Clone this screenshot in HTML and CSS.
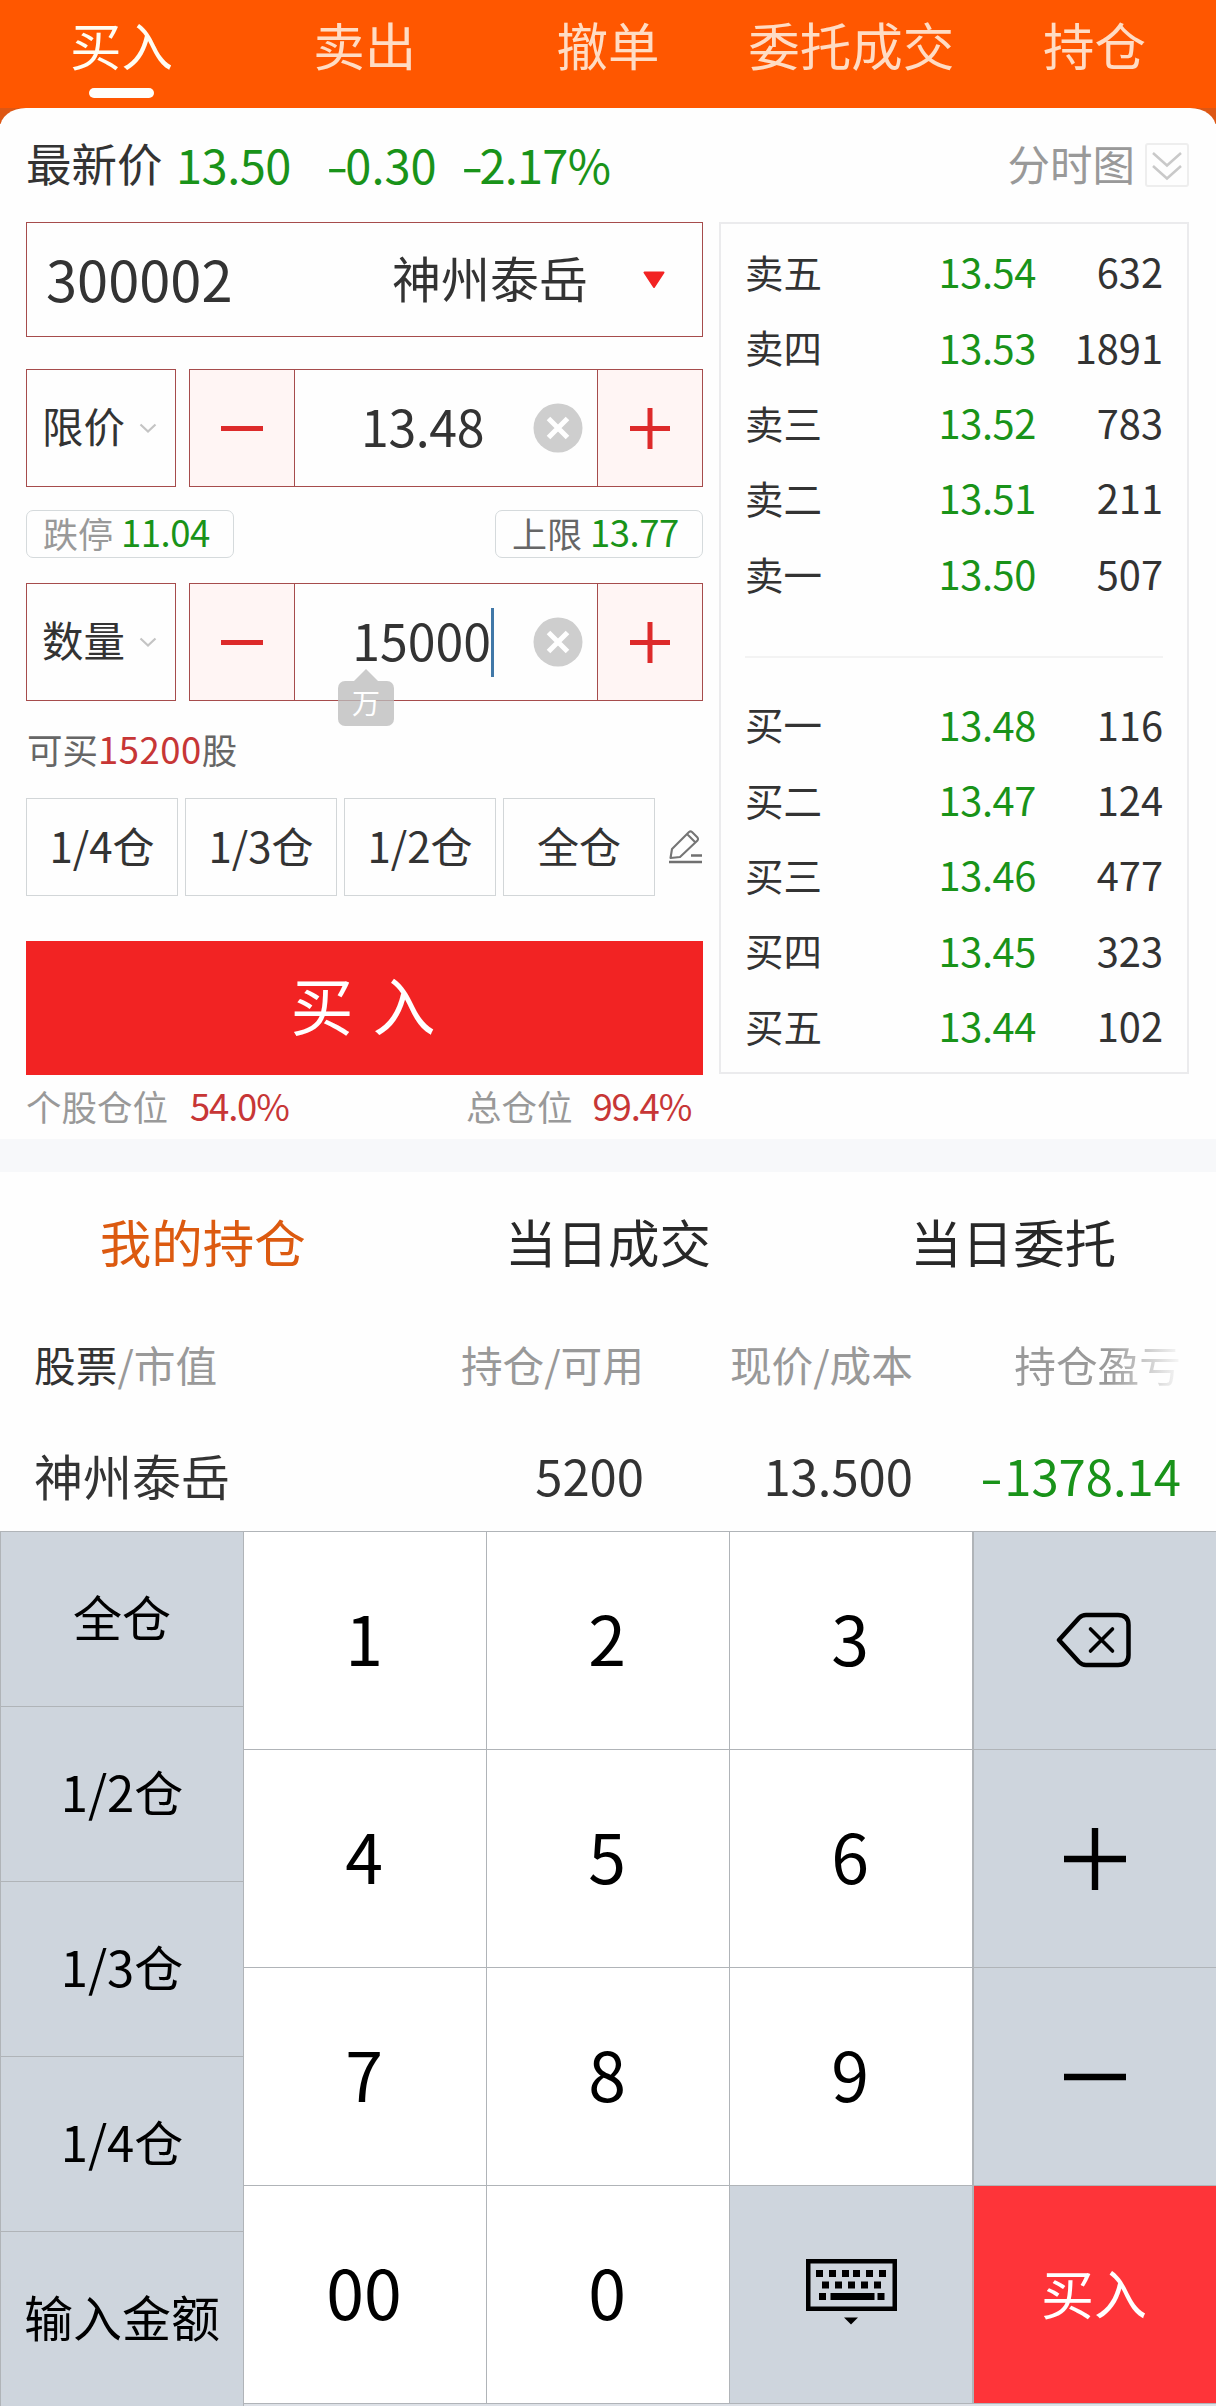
FILE: index.html
```html
<!DOCTYPE html>
<html lang="zh-CN">
<head>
<meta charset="utf-8">
<title>买入</title>
<link rel="stylesheet" href="styles.css">
</head>
<body>
<nav class="topnav">
  <div class="topnav-item active"><span>买入</span></div>
  <div class="topnav-item"><span>卖出</span></div>
  <div class="topnav-item"><span>撤单</span></div>
  <div class="topnav-item"><span>委托成交</span></div>
  <div class="topnav-item"><span>持仓</span></div>
</nav>

<div class="sheet-wrap">
<main class="sheet">
  <div class="quote">
    <span class="quote-label">最新价</span>
    <span class="quote-price">13.50</span>
    <span class="quote-diff"><i class="neg">-</i>0.30</span>
    <span class="quote-pct"><i class="neg">-</i>2.17%</span>
    <span class="quote-chart">分时图</span>
    <svg class="expand" viewBox="0 0 44 44"><rect x="1" y="1" width="42" height="42" rx="2" fill="none" stroke="#eee" stroke-width="2"/><path d="M8 10l14 12.500L36 10M8 23l14 12.500L36 23" fill="none" stroke="#c9c9c9" stroke-width="2.500"/></svg>
  </div>

  <div class="trade">
    <section class="form">
      <div class="stock">
        <span class="stock-code">300002</span>
        <span class="stock-name">神州泰岳</span>
        <svg class="caret" viewBox="0 0 24 18"><path d="M2.500 1.500h19L12 16z" fill="#f22323" stroke="#f22323" stroke-width="2" stroke-linejoin="round"/></svg>
      </div>

      <div class="field">
        <div class="field-type"><span>限价</span><svg class="chev" viewBox="0 0 18 10"><path d="M1.500 1.500L9 8.500l7.500-7" fill="none" stroke="#c4c4c4" stroke-width="2.200"/></svg></div>
        <div class="stepper">
          <div class="step"><svg class="sign" viewBox="0 0 42 42"><path d="M0 21.500h42" stroke="#dd2a2a" stroke-width="5"/></svg></div>
          <div class="value"><span class="num">13.48</span><svg class="clear" viewBox="0 0 50 50"><circle cx="25" cy="25" r="24.500" fill="#cecece"/><path d="M15.500 15.500l19 19m0-19l-19 19" stroke="#fff" stroke-width="5"/></svg></div>
          <div class="step"><svg class="sign" viewBox="0 0 42 42"><path d="M1 21.500h40M21 1v41" stroke="#dd2a2a" stroke-width="5"/></svg></div>
        </div>
      </div>

      <div class="limits">
        <div class="tag"><span class="muted">跌停</span><b>11.04</b></div>
        <div class="tag"><span>上限</span><b>13.77</b></div>
      </div>

      <div class="field">
        <div class="field-type"><span>数量</span><svg class="chev" viewBox="0 0 18 10"><path d="M1.500 1.500L9 8.500l7.500-7" fill="none" stroke="#c4c4c4" stroke-width="2.200"/></svg></div>
        <div class="stepper">
          <div class="step"><svg class="sign" viewBox="0 0 42 42"><path d="M0 21.500h42" stroke="#dd2a2a" stroke-width="5"/></svg></div>
          <div class="value"><span class="num">15000</span><i class="cursor"></i><svg class="clear" viewBox="0 0 50 50"><circle cx="25" cy="25" r="24.500" fill="#cecece"/><path d="M15.500 15.500l19 19m0-19l-19 19" stroke="#fff" stroke-width="5"/></svg>
            <div class="unit"><span>万</span></div>
          </div>
          <div class="step"><svg class="sign" viewBox="0 0 42 42"><path d="M1 21.500h40M21 1v41" stroke="#dd2a2a" stroke-width="5"/></svg></div>
        </div>
      </div>

      <p class="available">可买<b>15200</b>股</p>

      <div class="portions">
        <button class="portion"><span>1/4仓</span></button>
        <button class="portion"><span>1/3仓</span></button>
        <button class="portion"><span>1/2仓</span></button>
        <button class="portion"><span>全仓</span></button>
        <svg class="edit" viewBox="0 0 34 34"><path d="M1.500 28L3 19 20 2Q21.500 .8 23 2L28.500 7.500Q29.500 9 28.500 10.500L11 27zM18.500 4.500l7.500 7.500" fill="none" stroke="#757575" stroke-width="2.100" stroke-linejoin="round"/><path d="M22 25.500h11M0 32h33" stroke="#707070" stroke-width="2.400"/></svg>
      </div>

      <button class="buy"><span>买 入</span></button>

      <div class="ratios">
        <span>个股仓位</span><b>54.0%</b>
        <span class="ratio-total">总仓位</span><b>99.4%</b>
      </div>
    </section>

    <section class="book">
      <div class="level"><span>卖五</span><b>13.54</b><em>632</em></div>
      <div class="level"><span>卖四</span><b>13.53</b><em>1891</em></div>
      <div class="level"><span>卖三</span><b>13.52</b><em>783</em></div>
      <div class="level"><span>卖二</span><b>13.51</b><em>211</em></div>
      <div class="level"><span>卖一</span><b>13.50</b><em>507</em></div>
      <div class="book-split"></div>
      <div class="level"><span>买一</span><b>13.48</b><em>116</em></div>
      <div class="level"><span>买二</span><b>13.47</b><em>124</em></div>
      <div class="level"><span>买三</span><b>13.46</b><em>477</em></div>
      <div class="level"><span>买四</span><b>13.45</b><em>323</em></div>
      <div class="level"><span>买五</span><b>13.44</b><em>102</em></div>
    </section>
  </div>
</main>
</div>

<div class="divider"></div>

<section class="holdings">
  <div class="tabs">
    <div class="tab on">我的持仓</div>
    <div class="tab">当日成交</div>
    <div class="tab">当日委托</div>
  </div>
  <div class="cols head">
    <span><strong>股票</strong>/市值</span><span>持仓/可用</span><span>现价/成本</span><span class="fade">持仓盈亏</span>
  </div>
  <div class="cols row">
    <span>神州泰岳</span><span>5200</span><span>13.500</span><span class="loss"><i class="neg">-</i>1378.14</span>
  </div>
</section>

<section class="keypad">
  <div class="side">
    <div class="skey"><span>全仓</span></div>
    <div class="skey"><span>1/2仓</span></div>
    <div class="skey"><span>1/3仓</span></div>
    <div class="skey"><span>1/4仓</span></div>
    <div class="skey"><span>输入金额</span></div>
  </div>
  <div class="keys">
    <div class="key"><span>1</span></div>
    <div class="key"><span>2</span></div>
    <div class="key"><span>3</span></div>
    <div class="key fn"><svg class="icon-back" viewBox="0 0 76 56"><path d="M3 28L23 6Q26 3 30 3H62Q72.500 3 72.500 13V43Q72.500 53 62 53H30Q26 53 23 50Z" fill="none" stroke="#000" stroke-width="4.500" stroke-linejoin="round"/><path d="M34.500 17l22 22m0-22l-22 22" stroke="#000" stroke-width="3.600" stroke-linecap="round"/></svg></div>
    <div class="key"><span>4</span></div>
    <div class="key"><span>5</span></div>
    <div class="key"><span>6</span></div>
    <div class="key fn"><svg class="icon-sign" viewBox="0 0 62 62"><path d="M0 31h62M31 0v62" stroke="#000" stroke-width="6.400"/></svg></div>
    <div class="key"><span>7</span></div>
    <div class="key"><span>8</span></div>
    <div class="key"><span>9</span></div>
    <div class="key fn"><svg class="icon-sign" viewBox="0 0 62 62"><path d="M0 31h62" stroke="#000" stroke-width="6.400"/></svg></div>
    <div class="key"><span>00</span></div>
    <div class="key"><span>0</span></div>
    <div class="key fn"><svg class="icon-kbd" viewBox="0 0 91 66"><rect x="2.250" y="2.250" width="86.500" height="47.500" fill="none" stroke="#000" stroke-width="4.500"/><path d="M10 14.500h7m6 0h7m6 0h7m4 0h7m6 0h7m6 0h7M16 26h7m6 0h7m6 0h7m6 0h7m6 0h7M13 37.500h7m4.500 0h44m3 0h7" stroke="#000" stroke-width="7"/><path d="M38 58.500h14l-7 7z"/></svg></div>
    <div class="key confirm"><span>买入</span></div>
  </div>
</section>
</body>
</html>
```
FILE: styles.css
```css
* { box-sizing: border-box; }
body {
  margin: 0;
  width: 1216px;
  height: 2406px;
  overflow: hidden;
  background: #fefefe;
  color: #333;
  font-family: "Noto Sans CJK SC", sans-serif;
  font-weight: 400;
  line-height: 1;
  white-space: nowrap;
}
b, em, strong, i { font-weight: inherit; font-style: normal; }
svg { display: block; flex: none; }
button { font: inherit; color: inherit; background: none; padding: 0; border: 0; }

/* wide minus sign */
.neg { display: inline-block; transform: scaleX(1.35); transform-origin: 50% 50%; }

/* top navigation */
.topnav {
  display: grid;
  grid-template-columns: repeat(5, 1fr);
  height: 108px;
  background: #ff5700;
  color: #ffdcc4;
  font-size: 51.500px;
}
.topnav-item { display: flex; flex-direction: column; align-items: center; padding-top: 18px; }
.topnav-item.active { color: #fffdf2; }
.topnav-item.active::after {
  content: "";
  width: 65px;
  height: 10px;
  margin-top: 18px;
  border-radius: 5px;
  background: #fffefa;
}

.sheet-wrap { background: linear-gradient(#dd5714 16px, #fefefe 16px); }
.sheet { height: 1031px; padding: 0 26px; background: #fefefe; border-radius: 26px 26px 0 0 / 20px 20px 0 0; }

/* latest price */
.quote { display: flex; align-items: center; height: 114px; font-size: 47px; color: #199319; }
.quote > span { padding-bottom: 4px; }
.quote-label { width: 150px; font-size: 45.500px; color: #333; }
.quote-price { width: 153px; letter-spacing: -.5px; }
.quote-diff { width: 135px; }
.quote-pct { letter-spacing: -.8px; }
.quote-chart { margin-left: auto; font-size: 42.500px; color: #999; }
.expand { width: 44px; height: 44px; margin-left: 10px; margin-right: 1px; }

.trade { display: grid; grid-template-columns: 677px 470px; column-gap: 16px; align-items: start; }

/* order form */
.stock {
  display: flex;
  align-items: center;
  height: 115px;
  padding: 0 36px 0 19px;
  border: 1px solid #a64c4c;
}
.stock-code { width: 346px; padding-bottom: 4px; font-size: 56px; }
.stock-name { padding-bottom: 6px; font-size: 49px; }
.caret { width: 24px; height: 18px; margin-left: auto; }

.field { display: flex; gap: 13px; height: 118px; margin-top: 32px; }
.field-type {
  display: flex;
  align-items: center;
  justify-content: space-between;
  flex: none;
  width: 150px;
  padding: 0 18px 0 15px;
  border: 1px solid #a64c4c;
  font-size: 41.500px;
}
.field-type span { padding-bottom: 5px; }
.chev { width: 18px; height: 10px; }
.stepper { display: grid; grid-template-columns: 104px 304px 104px; flex: 1; border: 1px solid #a64c4c; }
.step { display: grid; place-items: center; background: #fff5f4; }
.sign { width: 42px; height: 42px; }
.value {
  position: relative;
  display: flex;
  align-items: center;
  justify-content: flex-end;
  padding-right: 14px;
  border: solid #a64c4c;
  border-width: 0 1px;
  font-size: 50px;
}
.num { padding-bottom: 6px; margin-right: 49px; letter-spacing: -.4px; }
.num:has(+ .cursor) { margin-right: 0; letter-spacing: 0; }
.cursor { width: 3px; height: 69px; margin-right: 39px; background: #4178a8; }
.clear { width: 50px; height: 50px; }
.unit {
  position: absolute;
  left: 43px;
  top: 97px;
  display: grid;
  place-items: center;
  width: 56px;
  height: 45px;
  padding-bottom: 3px;
  border-radius: 7px;
  background: rgba(188, 188, 188, .78);
  color: #fff;
  font-size: 28px;
}
.unit::before {
  content: "";
  position: absolute;
  left: 16px;
  top: -12px;
  border: solid transparent;
  border-width: 0 12px 12px;
  border-bottom-color: rgba(188, 188, 188, .78);
}

.limits { display: flex; justify-content: space-between; margin-top: 23px; margin-bottom: -7px; }
.tag {
  display: flex;
  align-items: center;
  gap: 8px;
  width: 208px;
  height: 48px;
  padding: 0 0 4px 16px;
  border: 1px solid #d5dadc;
  border-radius: 7px;
  font-size: 35px;
  color: #666;
}
.tag .muted { color: #999; }
.tag b { font-size: 36.500px; color: #199319; letter-spacing: -.5px; }

.available { height: 97px; margin: 0; padding-top: 30px; padding-left: 1px; font-size: 35.500px; color: #666; }
.available b { font-size: 36.500px; letter-spacing: .5px; color: #c73636; }

.portions { display: flex; align-items: center; gap: 7px; height: 98px; }
.portion { width: 152px; height: 98px; border: 1px solid #d2d6d8; font-size: 42px; }
.portion span { display: block; padding-bottom: 5px; }
.edit { width: 34px; height: 34px; margin-left: 7px; }

.buy { display: block; width: 100%; height: 134px; margin-top: 45px; background: #f22323; color: #fff; font-size: 63px; word-spacing: 5px; }
.buy span { display: block; padding-bottom: 12px; padding-right: 3px; }
.ratios { display: flex; align-items: center; height: 62px; font-size: 35.500px; color: #999; }
.ratios b { width: 100px; margin-left: 22px; font-size: 36.500px; letter-spacing: -1.2px; color: #c73636; }
.ratio-total { margin-left: 176px; }
.ratios .ratio-total + b { margin-left: 20px; }

/* order book */
.book { height: 852px; padding: 11px 24px 0; border: 2px solid #ebebed; font-size: 38.500px; }
.level { display: grid; grid-template-columns: 140px 151px 1fr; align-items: center; height: 75.400px; padding-bottom: 3px; }
.level b { text-align: right; font-size: 39.800px; letter-spacing: -.4px; color: #199319; }
.level em { text-align: right; font-size: 39.800px; }
.book-split { height: 75.400px; background: linear-gradient(#f3f3f3, #f3f3f3) 0 44px / 100% 2px no-repeat; }

.divider { height: 33px; background: #f7f8fa; }

/* holdings */
.holdings { height: 359px; }
.tabs { display: grid; grid-template-columns: repeat(3, 1fr); padding-top: 43px; height: 166px; text-align: center; font-size: 51.500px; color: #282828; }
.tab.on { color: #dc5a10; }
.cols { display: grid; grid-template-columns: 311px 299px 269px 268px; padding-left: 34px; text-align: right; }
.cols > :first-child { text-align: left; }
.head { height: 108px; padding-top: 6px; font-size: 41.700px; color: #999; }
.head strong { color: #333; }
.fade { color: transparent; background: linear-gradient(90deg, #999 195px, #fefefe 272px); background-clip: text; -webkit-background-clip: text; }
.row { padding-top: 4px; font-size: 49px; }
.loss { color: #199319; }
.loss .neg { margin-right: 4px; }

/* keypad */
.keypad { display: flex; height: 875px; border-top: 1px solid #b0b4b8; background: #dde1e7; color: #000; }
.side { width: 244px; display: grid; grid-template-rows: repeat(5, 175px); border: solid #b0b4b8; border-width: 0 1px; }
.skey { display: grid; place-items: center; border-bottom: 1px solid #b0b4b8; background: #ced5dd; font-size: 49px; }
.skey span { padding-bottom: 7px; }
.keys { flex: 1; display: grid; grid-template-columns: 243px 243px 244px 242px; grid-template-rows: repeat(4, 218px); }
.key { display: grid; place-items: center; border: solid #b0b4b8; border-width: 0 1px 1px 0; background: #fff; font-size: 68px; }
.key span { padding: 0 2px 7px 0; }
.key:nth-child(4n+3) { border-right-width: 2px; }
.key:nth-child(4n) { border-right: 0; }
.key.fn { background: #ced5dd; }
.key.confirm { background: #fe3439; color: #fff; font-size: 53px; }
.key.confirm span { padding: 0 2px 5px 0; }
.icon-back { width: 76px; height: 56px; margin: -2px 2px 0 0; }
.icon-sign { width: 62px; height: 62px; margin-right: 1px; }
.icon-kbd { width: 91px; height: 66px; margin-top: -5px; }
```
